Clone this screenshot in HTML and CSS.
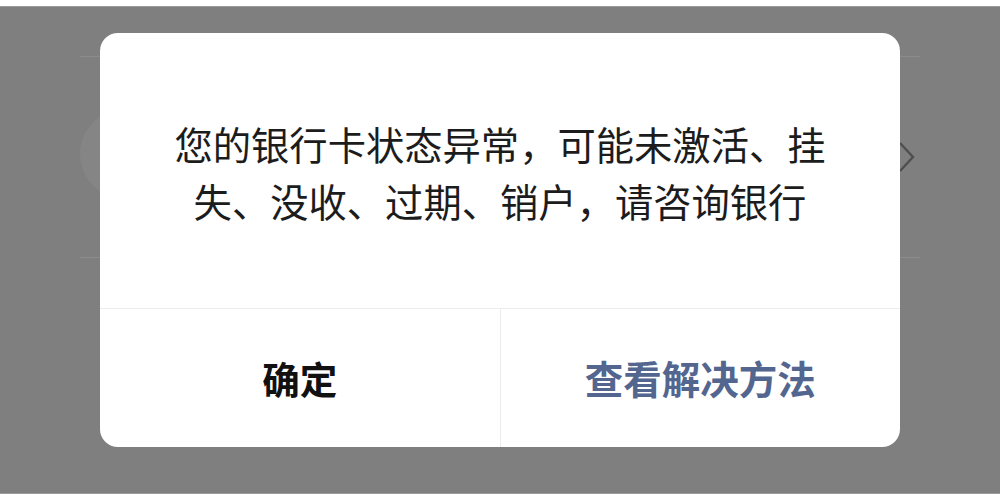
FILE: index.html
```html
<!DOCTYPE html>
<html lang="zh-CN">
<head>
<meta charset="utf-8">
<link rel="stylesheet" href="styles.css">
</head>
<body>
<div class="screen">
  <div class="page">
    <div class="card">
      <div class="avatar"></div>
      <svg class="chevron" width="18" height="32" viewBox="0 0 18 32"><path d="M2 2 L15 16 L2 30" fill="none" stroke="#4f4f4f" stroke-width="2.4"/></svg>
    </div>
  </div>
  <div class="dialog">
    <div class="message">您的银行卡状态异常，可能未激活、挂<br>失、没收、过期、销户，请咨询银行</div>
    <div class="actions">
      <div class="btn btn-ok">确定</div>
      <div class="btn btn-link">查看解决方法</div>
    </div>
  </div>
</div>
</body>
</html>
```
FILE: styles.css
```css
html, body {
  margin: 0;
  padding: 0;
  background: #ffffff;
  width: 1000px;
  height: 500px;
  overflow: hidden;
  font-family: "Noto Sans CJK SC", "Noto Sans", sans-serif;
}
.screen {
  position: relative;
  margin-top: 6px;
  height: 486px;
  background: #7f7f7f;
  border-top: 1px solid #9c9c9c;
  border-bottom: 1px solid #9c9c9c;
}
.page {
  padding: 49px 80px 0;
}
.card {
  position: relative;
  height: 200px;
  border-top: 1px solid #8c8c8c;
  border-bottom: 1px solid #8c8c8c;
}
.avatar {
  position: absolute;
  left: 0;
  top: 52px;
  width: 90px;
  height: 90px;
  border-radius: 50%;
  background: #858585;
}
.chevron {
  position: absolute;
  right: 4px;
  top: 84px;
}
.dialog {
  position: absolute;
  left: 100px;
  top: 26px;
  width: 800px;
  height: 414px;
  background: #ffffff;
  border-radius: 18px;
  display: flex;
  flex-direction: column;
  overflow: hidden;
}
.message {
  flex: 1;
  padding-top: 82px;
  box-sizing: border-box;
  text-align: center;
  font-size: 38.3px;
  line-height: 57px;
  color: #1c1c1c;
  border-bottom: 1px solid #ececec;
}
.actions {
  height: 138px;
  display: flex;
}
.btn {
  flex: 1;
  display: flex;
  align-items: center;
  justify-content: center;
  font-size: 37.5px;
  padding-bottom: 2px;
}
.btn-ok {
  color: #111111;
  font-weight: 700;
  border-right: 1px solid #ececec;
}
.btn-link {
  color: #53668f;
  font-size: 38.5px;
  font-weight: 600;
}
```
